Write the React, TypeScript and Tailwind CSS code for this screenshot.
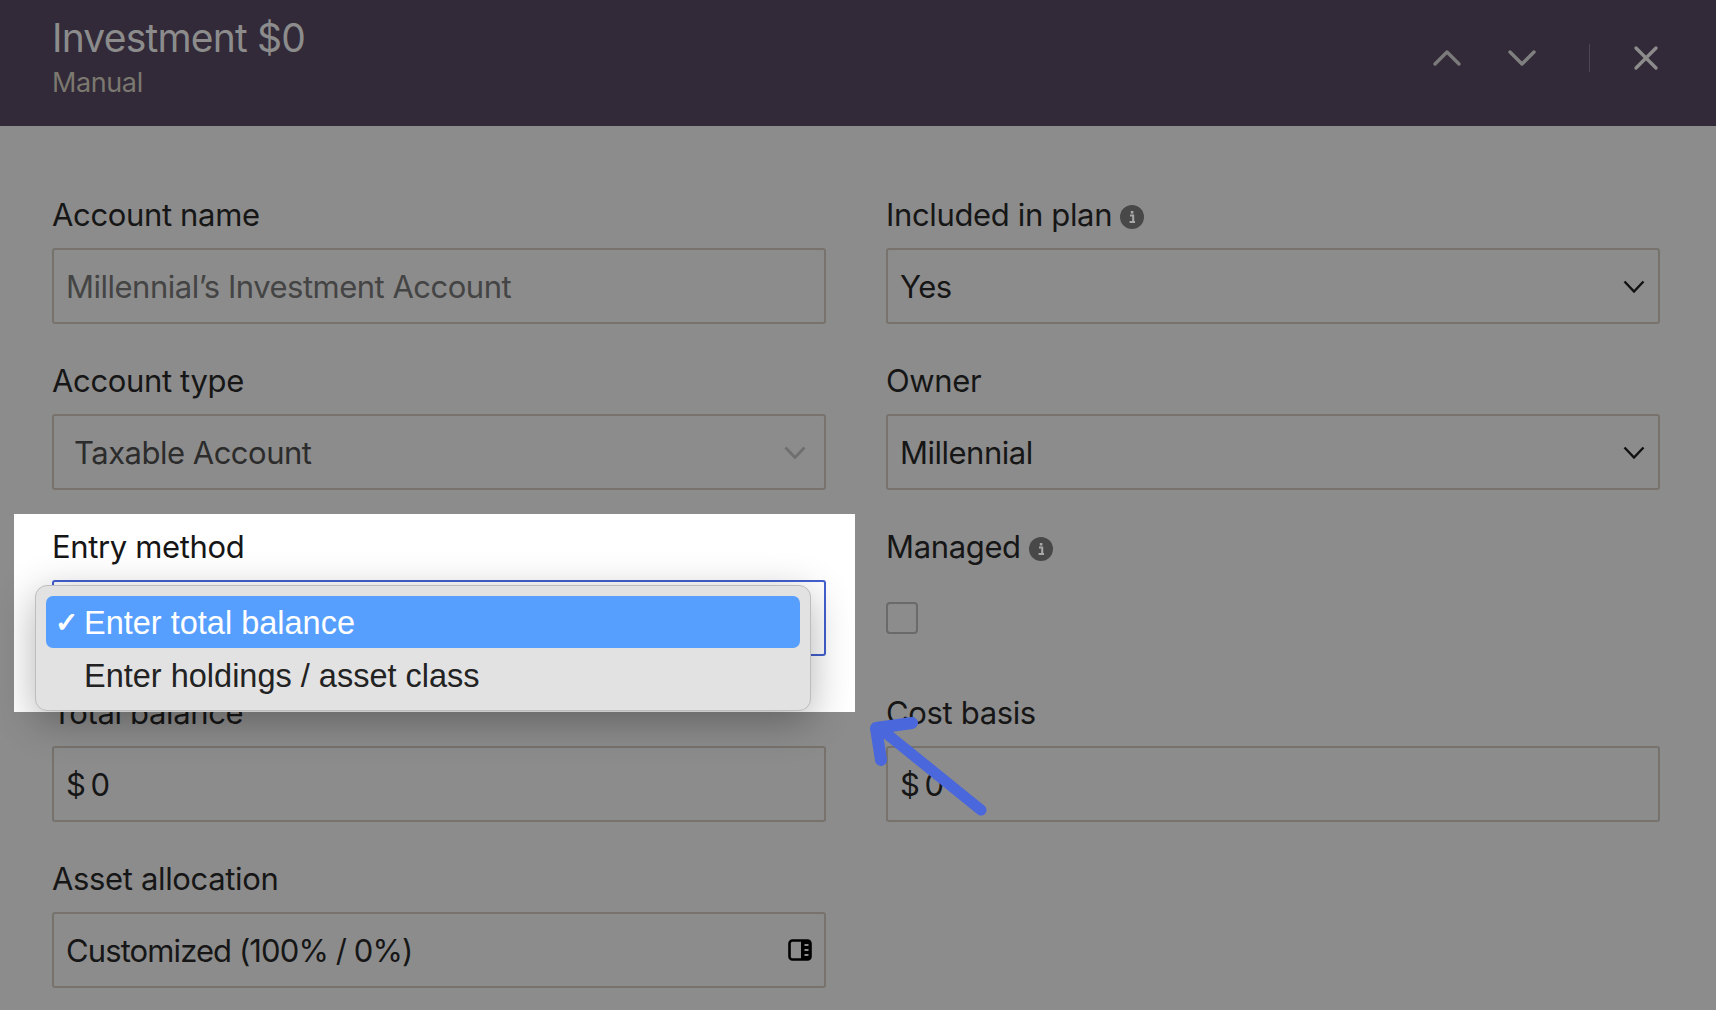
import React from "react";
import { ChevronDown, ChevronUp, X } from "lucide-react";

function Info() {
  return (
    <svg width="24" height="24" viewBox="0 0 24 24" className="mt-[3px] shrink-0">
      <circle cx="12" cy="12" r="12" fill="#484848" />
      <path d="M10 10.5h3.2V17H15M9.6 17h5.4" stroke="#a8a8a8" strokeWidth="2" fill="none" />
      <rect x="10.8" y="6" width="2.6" height="2.6" fill="#a8a8a8" />
    </svg>
  );
}

function Label({ children, info }: { children: React.ReactNode; info?: boolean }) {
  return (
    <div className="flex h-9 items-center gap-[8px] text-[31px] tracking-[-0.35px] text-[#161616]">
      <span>{children}</span>
      {info && <Info />}
    </div>
  );
}

function Box({ children, pad = "pl-[12px]", right, rightPad = "pr-[13px]" }: { children: React.ReactNode; pad?: string; right?: React.ReactNode; rightPad?: string }) {
  return (
    <div className={`mt-[15px] flex h-[76px] items-center justify-between rounded-[3px] border-2 border-[#77726c] text-[31px] tracking-[-0.5px] text-[#161616] ${pad} ${rightPad}`}>
      <span className="mt-[3px]">{children}</span>
      {right}
    </div>
  );
}

const Chev = ({ color = "#111", w = 2.4 }: { color?: string; w?: number }) => (
  <svg width="22" height="13" viewBox="0 0 22 13" fill="none" className="mt-[1px]">
    <path d="M1.5 1.5 11 11.5l9.5-10" stroke={color} strokeWidth={w} />
  </svg>
);

export default function App() {
  return (
    <div className="relative h-[1010px] w-[1716px] overflow-hidden bg-[#8c8c8c] font-['Inter',sans-serif] text-[#161616]">
      <header className="flex h-[126px] items-start justify-between bg-[#322a38] pl-[52px] pr-[50px]">
        <div className="flex flex-col">
          <div className="mt-[13px] text-[39px] leading-[50px] tracking-[-0.8px] text-[#8c8c8c]">Investment $0</div>
          <div className="mt-[5px] text-[27px] leading-[30px] tracking-[-0.4px] text-[#7b7870]">Manual</div>
        </div>
        <div className="mt-[44px] flex h-[28px] items-center">
          <ChevronUp size={48} strokeWidth={1.7} className="-my-3 text-[#7a7a7a]" />
          <ChevronDown size={48} strokeWidth={1.7} className="-my-3 ml-[27px] text-[#7f7f7f]" />
          <div className="ml-[43px] h-[28px] w-px bg-[#4d4650]" />
          <X size={40} strokeWidth={2} className="-my-3 ml-[36px] text-[#8c8c8c]" />
        </div>
      </header>

      <main className="grid grid-cols-[774px_774px] gap-x-[60px] gap-y-[39px] pl-[52px] pt-[71px]">
        <div>
          <Label>Account name</Label>
          <Box><span className="text-[#444444]">Millennial’s Investment Account</span></Box>
        </div>
        <div>
          <Label info>Included in plan</Label>
          <Box right={<Chev />}>Yes</Box>
        </div>
        <div>
          <Label>Account type</Label>
          <Box pad="pl-[20px]" rightPad="pr-[18px]" right={<Chev color="#6f6f6f" w={2.8} />}><span className="text-[#2c2c2c]">Taxable Account</span></Box>
        </div>
        <div>
          <Label>Owner</Label>
          <Box right={<Chev />}>Millennial</Box>
        </div>

        <div className="relative z-10">
          <div className="absolute -left-[38px] -top-[15px] h-[198px] w-[841px] bg-white" />
          <div className="relative">
            <Label>Entry method</Label>
            <div className="mt-[15px] h-[76px] rounded-[3px] border-2 border-[#4360cf]" />
          </div>
          <div className="absolute -left-[17px] top-[56px] flex h-[126px] w-[776px] flex-col rounded-[12px] border border-[#bdbdbd] bg-[#e2e2e2] p-[10px] font-['Liberation_Sans',sans-serif] text-[32.5px] shadow-[0_10px_40px_rgba(0,0,0,0.3)]">
            <div className="flex h-[52px] items-center rounded-[7px] bg-[#579fff] pl-[9px] pt-[3px] text-white">
              <span className="w-[29px] text-[28px] font-bold">✓</span>
              <span>Enter total balance</span>
            </div>
            <div className="mt-[1px] flex h-[52px] items-center pl-[38px] pt-[3px] text-[#222]">Enter holdings / asset class</div>
          </div>
        </div>
        <div>
          <Label info>Managed</Label>
          <div className="mt-[37px] h-8 w-8 rounded-[4px] border-2 border-[#6a6a6a]" />
        </div>

        <div>
          <Label>Total balance</Label>
          <Box><span className="tracking-[-2px]">$ 0</span></Box>
        </div>
        <div>
          <Label>Cost basis</Label>
          <Box><span className="tracking-[-2px]">$ 0</span></Box>
        </div>

        <div>
          <Label>Asset allocation</Label>
          <Box
            right={
              <svg width="24" height="22" viewBox="0 0 24 22" className="-mr-[1px]">
                <rect x="1.5" y="1.5" width="21" height="19" rx="3" fill="none" stroke="#000" strokeWidth="2.6" />
                <rect x="13" y="1.5" width="9.5" height="19" fill="#000" />
                <path d="M16.5 6h4M16.5 11h4M16.5 16h4" stroke="#8c8c8c" strokeWidth="1.8" />
              </svg>
            }
          >
            <span className="tracking-[-0.9px]">Customized (100% / 0%)</span>
          </Box>
        </div>
      </main>

      <svg className="pointer-events-none absolute left-[860px] top-[710px] z-20" width="140" height="120" viewBox="0 0 140 120" fill="none">
        <path d="M121 100 22 20" stroke="#4a67dc" strokeWidth="11" strokeLinecap="round" />
        <path d="M52 13 16 18l5 32" stroke="#4a67dc" strokeWidth="12" strokeLinecap="round" strokeLinejoin="round" />
      </svg>
    </div>
  );
}
